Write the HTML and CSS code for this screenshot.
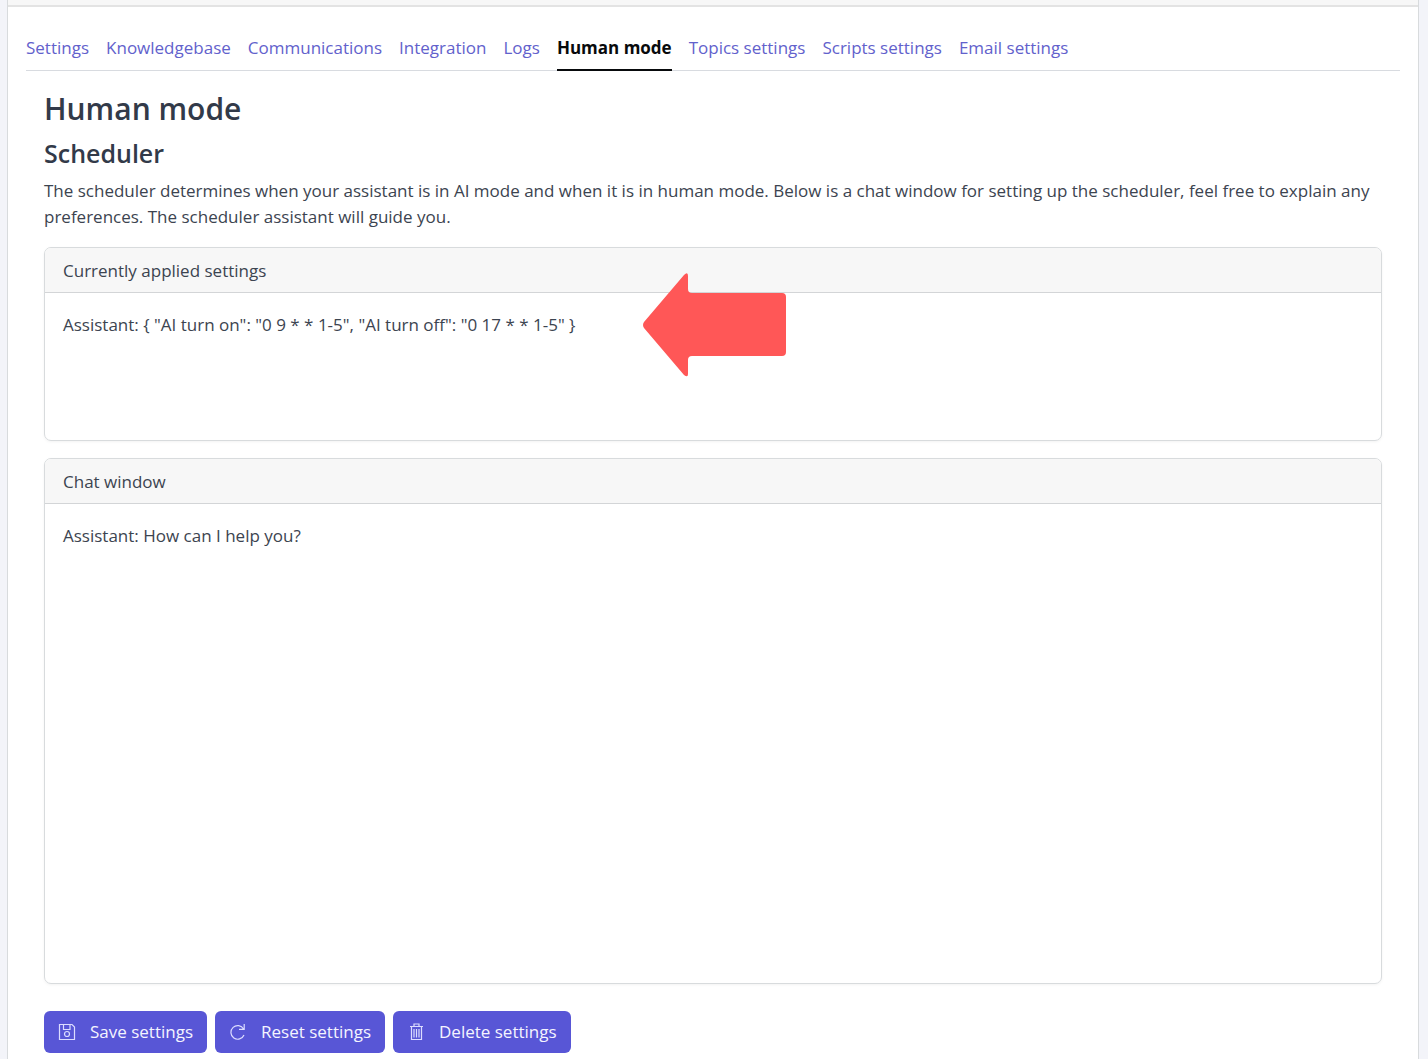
FILE: index.html
```html
<!DOCTYPE html>
<html lang="en">
<head>
    <title>Human mode</title>
    <meta charset="UTF-8">
    <meta name="viewport" content="width=device-width, initial-scale=1">
    <link rel="stylesheet" href="styles.css">
</head>
<body>
    <div class="panel">
        <div class="panel-header"></div>
        <nav class="tabs">
            <a href="#settings">Settings</a>
            <a href="#knowledgebase">Knowledgebase</a>
            <a href="#communications">Communications</a>
            <a href="#integration">Integration</a>
            <a href="#logs">Logs</a>
            <a href="#human-mode" class="active">Human mode</a>
            <a href="#topics">Topics settings</a>
            <a href="#scripts">Scripts settings</a>
            <a href="#email">Email settings</a>
        </nav>

        <main class="content">
            <h1>Human mode</h1>
            <h2>Scheduler</h2>
            <p class="intro">The scheduler determines when your assistant is in AI mode and when it is in human mode. Below is a chat window for setting up the scheduler, feel free to explain any preferences. The scheduler assistant will guide you.</p>

            <section class="card">
                <div class="card-header">Currently applied settings</div>
                <div class="card-body applied">
                    Assistant: { "AI turn on": "0 9 * * 1-5", "AI turn off": "0 17 * * 1-5" }
                    <svg class="arrow" width="144" height="104" viewBox="0 0 144 104">
                        <path fill="#ff5757" d="M1 49 L41 2 Q45 -2 45 3 V16 Q45 20 49 20 H139 Q143 20 143 24 V79 Q143 83 139 83 H49 Q45 83 45 87 V101 Q45 105 41 102 L1 55 Q-1 52 1 49 Z"/>
                    </svg>
                </div>
            </section>

            <section class="card">
                <div class="card-header">Chat window</div>
                <div class="card-body chat">Assistant: How can I help you?</div>
            </section>

            <div class="actions">
                <button type="button">
                    <svg width="18" height="18" viewBox="0 0 18 18">
                        <path d="M1.5 1.5 H14 L16.5 4 V16.5 H1.5 Z M5.5 1.5 V6.5 H12 V1.5"/>
                        <circle cx="9" cy="11" r="2.5"/>
                    </svg>
                    Save settings
                </button>
                <button type="button">
                    <svg width="18" height="18" viewBox="0 0 18 18">
                        <path d="M15 12 A6.8 6.8 0 1 1 14.6 6 M15.2 1 V6.3 H10"/>
                    </svg>
                    Reset settings
                </button>
                <button type="button">
                    <svg width="18" height="18" viewBox="0 0 18 18">
                        <path d="M3 3.5 H16 M7 3.5 V1 H12 V3.5 M4.5 3.5 V16.5 H14.5 V3.5 M7 6 V14.5 M9.5 6 V14.5 M12 6 V14.5"/>
                    </svg>
                    Delete settings
                </button>
            </div>
        </main>
    </div>
</body>
</html>
```
FILE: styles.css
```css
body {
    margin: 0;
    padding: 0 9px 0 7px;
    background: #f3f4f9;
    color: #3c4450;
    font-family: "Open Sans", "Noto Sans", sans-serif;
    font-size: 17px;
    line-height: 26px;
}

.panel {
    background: #fff;
    border: 1px solid #d8dbdd;
    border-width: 0 1px;
}

.panel-header {
    height: 5px;
    background: #f7f7f7;
    border-bottom: 2px solid #e3e3e3;
}

/* tabs */
.tabs {
    display: flex;
    gap: 17px;
    margin: 18px 18px 0;
    border-bottom: 1px solid #d8dbe0;
}

.tabs a {
    padding: 10px 0 8px;
    border-bottom: 2px solid transparent;
    margin-bottom: -1px;
    color: #6261cc;
    text-decoration: none;
    white-space: nowrap;
}

.tabs .active {
    color: #080a0c;
    font-weight: bold;
    border-bottom-color: #080a0c;
}

.content {
    padding: 19px 36px 6px;
}

h1, h2 {
    margin: 0 0 8px;
    color: #323a49;
    font-weight: 600;
}

h1 {
    font-size: 30px;
    line-height: 38px;
}

h2 {
    font-size: 25px;
    line-height: 34px;
}

.intro {
    margin: 0 0 17px;
}

/* cards */
.card {
    margin-bottom: 17px;
    border: 1px solid #d8dbdd;
    border-radius: 7px;
    box-shadow: 0 1px 3px rgba(0, 0, 0, 0.05);
}

.card-header {
    padding: 10px 18px 8px;
    background: #f7f7f7;
    border-bottom: 1px solid #d3d5d7;
    border-radius: 6px 6px 0 0;
}

.card-body {
    padding: 19px 18px 18px;
}

.applied {
    position: relative;
    min-height: 110px;
}

.chat {
    min-height: 442px;
}

/* pointer lying over the card */
.arrow {
    position: absolute;
    top: -20px;
    left: 598px;
}

/* buttons */
.actions {
    display: flex;
    gap: 8px;
    padding-top: 10px;
}

button {
    display: flex;
    align-items: center;
    gap: 14px;
    padding: 8px 14px;
    border: 0;
    border-radius: 6px;
    background: #5856d6;
    color: #f4f4ff;
    font-family: inherit;
    font-size: 17px;
    line-height: 26px;
}

button svg {
    fill: none;
    stroke: #dcdcff;
    stroke-width: 1.2;
}
```
